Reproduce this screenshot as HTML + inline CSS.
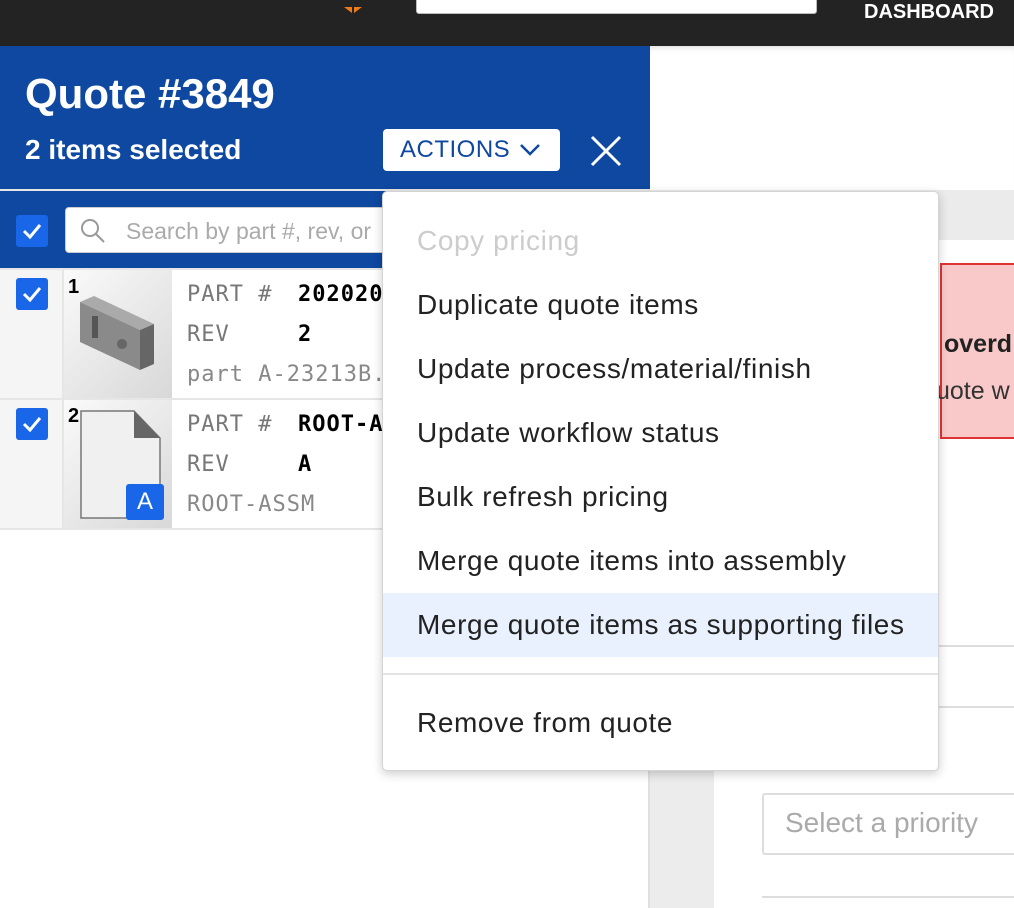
<!DOCTYPE html>
<html><head><style>
*{box-sizing:border-box;margin:0;padding:0}
body{width:1014px;height:908px;overflow:hidden;position:relative;background:#fff;font-family:"Liberation Sans",sans-serif}
.a{position:absolute}
.mono{font-family:"DejaVu Sans Mono","Liberation Mono",monospace;font-size:22px;letter-spacing:1px}
.cb{position:absolute;width:32px;height:32px;background:#1a66e8;border-radius:3px}
.cb svg{position:absolute;left:6px;top:7px}
.item{position:absolute;left:34px;font-size:28px;color:#222;letter-spacing:0.6px}
</style></head><body>
<div class="a" style="left:0;top:0;width:1014px;height:46px;background:#232323"></div>
<div class="a" style="left:338px;top:0;width:30px;height:6px;"><svg width="30" height="6"><path d="M6 0 L14 6 L14 0Z M16 0 L16 6 L24 0Z" fill="#f07a1a"/></svg></div>
<div class="a" style="left:416px;top:-6px;width:401px;height:20px;background:#fff;border:1px solid #bbb;border-radius:3px"></div>
<div class="a" style="left:864px;top:1px;color:#fff;font-weight:bold;font-size:20px">DASHBOARD</div>

<div class="a" style="left:650px;top:46px;width:364px;height:144px;background:#fff;box-shadow:inset 0 6px 8px -6px rgba(0,0,0,.2)"></div>
<div class="a" style="left:650px;top:190px;width:364px;height:50px;background:#ebebeb"></div>
<div class="a" style="left:650px;top:240px;width:64px;height:668px;background:#ececec"></div>
<div class="a" style="left:940px;top:263px;width:80px;height:176px;background:#f8c9c8;border:2px solid #e03434"></div>
<div class="a" style="left:944px;top:330px;font-size:25px;font-weight:bold;color:#222">overd</div>
<div class="a" style="left:936px;top:377px;font-size:25px;color:#333">uote w</div>
<div class="a" style="left:714px;top:645px;width:300px;height:2px;background:#ddd"></div>
<div class="a" style="left:714px;top:706px;width:300px;height:2px;background:#ddd"></div>
<div class="a" style="left:762px;top:793px;width:260px;height:62px;border:2px solid #ddd;border-radius:3px"></div>
<div class="a" style="left:785px;top:807px;font-size:28px;color:#aaa">Select a priority</div>
<div class="a" style="left:762px;top:896px;width:260px;height:2px;background:#ddd"></div>

<div class="a" style="left:0;top:46px;width:650px;height:222px;background:#0e48a0"></div>
<div class="a" style="left:0;top:189px;width:650px;height:2px;background:#e6e6e6"></div>
<div class="a" style="left:25px;top:70px;color:#fff;font-weight:bold;font-size:42px">Quote #3849</div>
<div class="a" style="left:25px;top:134px;color:#fff;font-weight:bold;font-size:28px">2 items selected</div>
<div class="a" style="left:383px;top:129px;width:177px;height:42px;background:#fff;border-radius:4px"></div>
<div class="a" style="left:400px;top:136px;color:#0e48a0;font-size:24px;letter-spacing:0.5px">ACTIONS</div>
<svg class="a" style="left:519px;top:143px" width="22" height="14"><path d="M2 2 L11 11 L20 2" stroke="#0e48a0" stroke-width="2.5" fill="none"/></svg>
<svg class="a" style="left:590px;top:135px" width="32" height="32"><path d="M2 2 L30 30 M30 2 L2 30" stroke="#fff" stroke-width="3"/></svg>

<div class="cb" style="left:16px;top:215px"><svg width="20" height="18"><path d="M2 9 L8 15 L18 3" stroke="#fff" stroke-width="3" fill="none"/></svg></div>
<div class="a" style="left:65px;top:207px;width:340px;height:46px;background:#fff;border:1px solid #ccc;border-radius:4px"></div>
<svg class="a" style="left:80px;top:218px" width="26" height="26"><circle cx="10" cy="10" r="8" stroke="#999" stroke-width="2" fill="none"/><path d="M16 16 L24 24" stroke="#999" stroke-width="2"/></svg>
<div class="a" style="left:126px;top:218px;font-size:23px;color:#aaa">Search by part #, rev, or</div>

<div class="a" style="left:0;top:268px;width:650px;height:2px;background:#e6e6e6"></div>
<div class="a" style="left:0;top:270px;width:62px;height:258px;background:#f5f5f5"></div>
<div class="a" style="left:62px;top:270px;width:2px;height:258px;background:#e6e6e6"></div>
<div class="a" style="left:0;top:398px;width:650px;height:2px;background:#e6e6e6"></div>
<div class="a" style="left:0;top:528px;width:650px;height:2px;background:#e6e6e6"></div>
<div class="a" style="left:648px;top:268px;width:2px;height:640px;background:#e0e0e0"></div>
<div class="cb" style="left:16px;top:278px"><svg width="20" height="18"><path d="M2 9 L8 15 L18 3" stroke="#fff" stroke-width="3" fill="none"/></svg></div>
<div class="cb" style="left:16px;top:408px"><svg width="20" height="18"><path d="M2 9 L8 15 L18 3" stroke="#fff" stroke-width="3" fill="none"/></svg></div>
<div class="a" style="left:64px;top:270px;width:108px;height:128px;background:linear-gradient(135deg,#fafafa,#d8d8d8)"></div>
<div class="a" style="left:64px;top:400px;width:108px;height:128px;background:linear-gradient(135deg,#fafafa,#d8d8d8)"></div>
<svg class="a" style="left:78px;top:294px" width="80" height="80"><path d="M2 8 L16 2 L76 30 L62 36Z" fill="#aaa"/><path d="M2 8 L62 36 L62 76 L2 48Z" fill="#8a8a8a"/><path d="M62 36 L76 30 L76 70 L62 76Z" fill="#666"/><rect x="14" y="22" width="6" height="22" fill="#555"/><circle cx="44" cy="50" r="5" fill="#666"/></svg>
<div class="a" style="left:68px;top:276px;font-size:20px;font-weight:bold">1</div>
<svg class="a" style="left:80px;top:410px" width="82" height="110"><path d="M1 1 L54 1 L80 28 L80 108 L1 108Z" fill="#f0f0f0" stroke="#777" stroke-width="1.5"/><path d="M54 1 L54 28 L80 28Z" fill="#666"/></svg>
<div class="a" style="left:68px;top:405px;font-size:20px;font-weight:bold">2</div>
<div class="a" style="left:126px;top:484px;width:38px;height:36px;background:#1a66e8;border-radius:3px;color:#fff;font-size:24px;text-align:center;line-height:36px">A</div>

<div class="a mono" style="left:187px;top:282px;color:#777">PART #</div>
<div class="a mono" style="left:298px;top:282px;color:#000;font-weight:bold">202020</div>
<div class="a mono" style="left:187px;top:322px;color:#777">REV</div>
<div class="a mono" style="left:298px;top:322px;color:#000;font-weight:bold">2</div>
<div class="a mono" style="left:187px;top:362px;color:#888">part A-23213B.</div>
<div class="a mono" style="left:187px;top:412px;color:#777">PART #</div>
<div class="a mono" style="left:298px;top:412px;color:#000;font-weight:bold">ROOT-A</div>
<div class="a mono" style="left:187px;top:452px;color:#777">REV</div>
<div class="a mono" style="left:298px;top:452px;color:#000;font-weight:bold">A</div>
<div class="a mono" style="left:187px;top:492px;color:#888">ROOT-ASSM</div>

<div class="a" style="left:382px;top:191px;width:557px;height:580px;background:#fff;border:1px solid #d4d4d4;border-radius:5px;box-shadow:0 3px 10px rgba(0,0,0,.2)">
<div class="item" style="top:33px;color:#ccc">Copy pricing</div>
<div class="item" style="top:97px">Duplicate quote items</div>
<div class="item" style="top:161px">Update process/material/finish</div>
<div class="item" style="top:225px">Update workflow status</div>
<div class="item" style="top:289px">Bulk refresh pricing</div>
<div class="item" style="top:353px">Merge quote items into assembly</div>
<div class="a" style="left:0;top:401px;width:555px;height:64px;background:#e8f1fd"></div>
<div class="item" style="top:417px">Merge quote items as supporting files</div>
<div class="a" style="left:0;top:481px;width:555px;height:2px;background:#e4e4e4"></div>
<div class="item" style="top:515px">Remove from quote</div>
</div>
</body></html>
